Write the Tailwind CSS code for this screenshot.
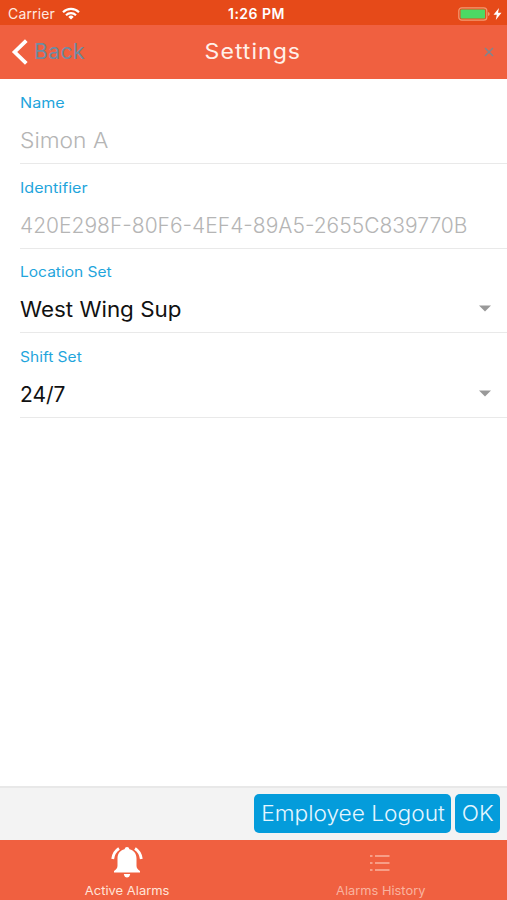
<!DOCTYPE html>
<html lang="en">
<head>
<meta charset="utf-8">
<title>Settings</title>
<script src="https://cdn.jsdelivr.net/npm/@tailwindcss/browser@4"></script>
</head>
<body class="w-[507px] h-[900px] overflow-hidden bg-white font-['Inter','Open_Sans',sans-serif]">
<div class="flex flex-col h-full">
  <div class="h-[25px] shrink-0 bg-[#e64a19] text-white grid grid-cols-3 items-center pl-[8px] pr-[5px] pt-[2px]">
    <div class="flex items-center gap-[7px]"><span class="text-[14px] leading-[20px] tracking-[0.15px] text-[#ffe9e0]">Carrier</span>
      <svg class="w-[18px] h-[13px]" viewBox="0 0 18 13" fill="none" stroke="#fff" stroke-width="2.2"><path d="M1 5.2a11.4 11.4 0 0 1 16 0M4 8.2a7.2 7.2 0 0 1 10 0"/><path d="M9 12.6L6.3 9.9a3.9 3.9 0 0 1 5.4 0z" fill="#fff" stroke="none"/></svg></div>
    <div class="text-center text-[14px] leading-[20px] font-semibold tracking-[0.5px] whitespace-nowrap pl-[3px]">1:26 PM</div>
    <div class="flex items-center justify-end gap-[3px]">
      <svg class="w-[32px] h-[14px]" viewBox="0 0 32 14"><rect x=".8" y=".8" width="28" height="12.4" rx="3" fill="none" stroke="#f29a72" stroke-width="1.2"/><rect x="2.5" y="2.5" width="24.6" height="9" rx="1" fill="#4cd964"/><path d="M30 5v4q1.7-.7 1.7-2T30 5" fill="#f29a72"/></svg>
      <svg class="w-[9px] h-[12px]" viewBox="0 0 9 12"><path d="M6 0L.5 6.8h3.3L2.8 12l5.7-7.2H5z" fill="#fff"/></svg>
    </div>
  </div>
  <div class="h-[54px] shrink-0 bg-[#f06040] grid grid-cols-3 items-center pl-[11px] pr-[13px]">
    <div class="flex items-center gap-[6px]"><svg class="w-[17px] h-[26px]" viewBox="0 0 17 26" fill="none" stroke="#fff" stroke-width="3.8"><path d="M15.3 1.6L3.6 13l11.7 11.4"/></svg><span class="text-[21px] leading-[28px] tracking-[0.5px] text-[#6f8ba0]">Back</span></div>
    <div class="text-center text-[21px] leading-[28px] text-[#fff0e9]"><span class="inline-block scale-x-[1.1] tracking-[0.9px]">Settings</span></div>
    <svg class="justify-self-end w-[10px] h-[10px]" viewBox="0 0 10 10" stroke="#7d868f" stroke-width="1.5"><path d="M1 1l8 8M9 1L1 9"/></svg>
  </div>
  <main class="flex-1 pl-[20px] pt-[0.4px]">
    <div class="h-[84.67px] border-b border-[#e9e9e9] pt-[13.5px]"><div class="text-[14px] leading-[20px] text-[#1fa5dc]"><span class="inline-block origin-left scale-x-[1.15]">Name</span></div><div class="mt-[14px] text-[21px] leading-[28px] font-light text-[#b5b5b5]"><span class="inline-block origin-left scale-x-[1.085]">Simon A</span></div></div>
    <div class="h-[84.67px] border-b border-[#e9e9e9] pt-[13.5px]"><div class="text-[14px] leading-[20px] text-[#1fa5dc]"><span class="inline-block origin-left scale-x-[1.15]">Identifier</span></div><div class="mt-[14px] text-[21px] leading-[28px] font-light text-[#b5b5b5] whitespace-nowrap">420E298F-80F6-4EF4-89A5-2655C839770B</div></div>
    <div class="h-[84.67px] border-b border-[#e9e9e9] pt-[13.5px]"><div class="text-[14px] leading-[20px] text-[#1fa5dc]"><span class="inline-block origin-left scale-x-[1.11]">Location Set</span></div><div class="mt-[14px] flex items-center justify-between pr-[16px] text-[21px] leading-[28px] text-[#111]"><span class="inline-block origin-left scale-x-[1.066]">West Wing Sup</span><svg class="w-[12px] h-[7px] -mt-[3px]" viewBox="0 0 12 7"><path d="M0 .5h12L6 6.5z" fill="#999"/></svg></div></div>
    <div class="h-[84.67px] border-b border-[#e9e9e9] pt-[13.5px]"><div class="text-[14px] leading-[20px] text-[#1fa5dc]"><span class="inline-block origin-left scale-x-[1.11]">Shift Set</span></div><div class="mt-[14px] flex items-center justify-between pr-[16px] text-[21px] leading-[28px] text-[#111]"><span>24/7</span><svg class="w-[12px] h-[7px] -mt-[3px]" viewBox="0 0 12 7"><path d="M0 .5h12L6 6.5z" fill="#999"/></svg></div></div>
  </main>
  <div class="h-[54px] shrink-0 border-t-2 border-[#e8e8e8] bg-[#f3f3f3] flex items-start justify-end gap-[4px] pr-[7px] pt-[6px]">
    <div class="w-[197px] h-[39px] rounded-[5px] bg-[#049cdb] text-[#e4f6ff] text-[21px] leading-[28px] font-light flex items-center justify-center whitespace-nowrap"><span class="inline-block scale-x-[1.08]">Employee Logout</span></div>
    <div class="w-[45px] h-[39px] rounded-[5px] bg-[#049cdb] text-[#e4f6ff] text-[21px] leading-[28px] font-light flex items-center justify-center"><span class="inline-block scale-x-[1.08]">OK</span></div>
  </div>
  <div class="h-[60px] shrink-0 bg-[#f06040] grid grid-cols-2 text-[12px] leading-[16px]">
    <div class="flex flex-col items-center justify-between pt-[7px] pb-[1px] text-[#ffe4d8]"><svg class="w-[32px] h-[31px]" viewBox="0 0 32 31"><path d="M16 0q2 0 2.500 2.200c4.600 1 7 4.600 7 9.300v7c0 2.500 1 3.800 3.500 5.500v1.500H3V24c2.500-1.700 3.500-3 3.500-5.500v-7c0-4.700 2.400-8.300 7-9.300Q14 0 16 0zM12.800 27h6.400q-.7 3.500-3.200 3.500T12.800 27z" fill="#fff"/><path d="M8 1.500Q2.500 5 1.700 12M24 1.500Q29.500 5 30.300 12" fill="none" stroke="#fff" stroke-width="2.800"/></svg><span class="inline-block scale-x-[1.08]">Active Alarms</span></div>
    <div class="flex flex-col items-center justify-between pt-[14px] pb-[1px] text-[#f9b39f]"><svg class="w-[20px] h-[18px]" viewBox="0 0 20 18" stroke="#f9b39f" stroke-width="1.6"><path d="M0 2h2.500M5 2h14.500M0 9h2.500M5 9h14.500M0 16h2.500M5 16h14.500"/></svg><span class="inline-block scale-x-[1.07]">Alarms History</span></div>
  </div>
</div>
</body>
</html>
